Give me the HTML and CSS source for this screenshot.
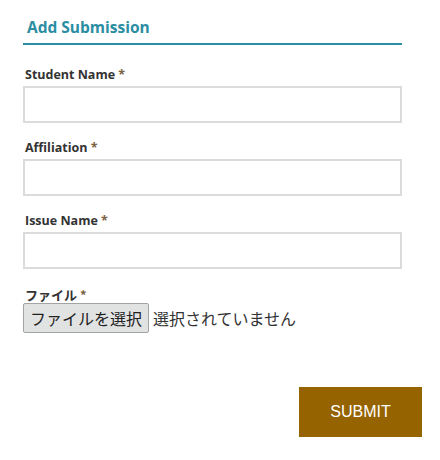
FILE: index.html
```html
<!DOCTYPE html>
<html lang="ja">
<head>
<meta charset="utf-8">
<link rel="stylesheet" href="styles.css">
</head>
<body>
<form class="form">
  <h2 class="title">Add Submission</h2>
  <div class="field">
    <label class="label">Student Name <span class="req">*</span></label>
    <input class="input" type="text">
  </div>
  <div class="field">
    <label class="label">Affiliation <span class="req">*</span></label>
    <input class="input" type="text">
  </div>
  <div class="field">
    <label class="label">Issue Name <span class="req">*</span></label>
    <input class="input" type="text">
  </div>
  <div class="field file-field">
    <label class="label jp">ファイル <span class="req">*</span></label>
    <div class="file-row">
      <span class="file-btn">ファイルを選択</span>
      <span class="file-status">選択されていません</span>
    </div>
  </div>
  <div class="actions">
    <button class="submit" type="button">SUBMIT</button>
  </div>
</form>
</body>
</html>
```
FILE: styles.css
```css
html, body {
  margin: 0;
  padding: 0;
  background: #ffffff;
}
body {
  font-family: "Open Sans", "Noto Sans CJK JP", sans-serif;
  color: #333333;
}
.form {
  width: 379px;
  padding: 17px 38px 0 23px;
}
.title {
  margin: 0;
  padding: 0 0 6px 4px;
  font-size: 15.5px;
  font-weight: 700;
  color: #2b8da3;
  line-height: 20px;
  border-bottom: 2px solid #2b8da3;
}
.field {
  margin-top: 22px;
}
.field + .field {
  margin-top: 17px;
}
.label {
  display: block;
  padding-left: 2px;
  font-size: 12.5px;
  font-weight: 700;
  line-height: 16px;
  color: #333333;
  margin-bottom: 3px;
}
.req {
  color: #7a6242;
}
.input {
  display: block;
  box-sizing: border-box;
  width: 379px;
  height: 37px;
  margin: 0;
  border: 2px solid #dadcdc;
  background: #ffffff;
  padding: 0 8px;
  font: inherit;
}
.field.file-field {
  margin-top: 18px;
}
.label.jp {
  font-family: "Noto Sans CJK JP", sans-serif;
  font-weight: 700;
  font-size: 13px;
  line-height: 16px;
  margin-bottom: 0;
}
.file-row {
  display: flex;
  align-items: center;
  gap: 4px;
}
.file-btn {
  box-sizing: border-box;
  height: 30px;
  padding: 0 6px;
  display: flex;
  align-items: center;
  background: #e1e3e3;
  border: 1px solid #a3a3a3;
  border-radius: 2px;
  font-family: "Noto Sans CJK JP", sans-serif;
  font-size: 16px;
  color: #222222;
}
.file-status {
  font-family: "Noto Sans CJK JP", sans-serif;
  font-size: 16px;
  color: #333333;
}
.actions {
  display: flex;
  justify-content: flex-end;
  margin-top: 54px;
  margin-right: -20px;
}
.submit {
  width: 123px;
  height: 50px;
  border: none;
  background: #956300;
  color: #ffffff;
  font-family: "Liberation Sans", Arial, sans-serif;
  font-size: 16px;
  padding: 0;
}
```
